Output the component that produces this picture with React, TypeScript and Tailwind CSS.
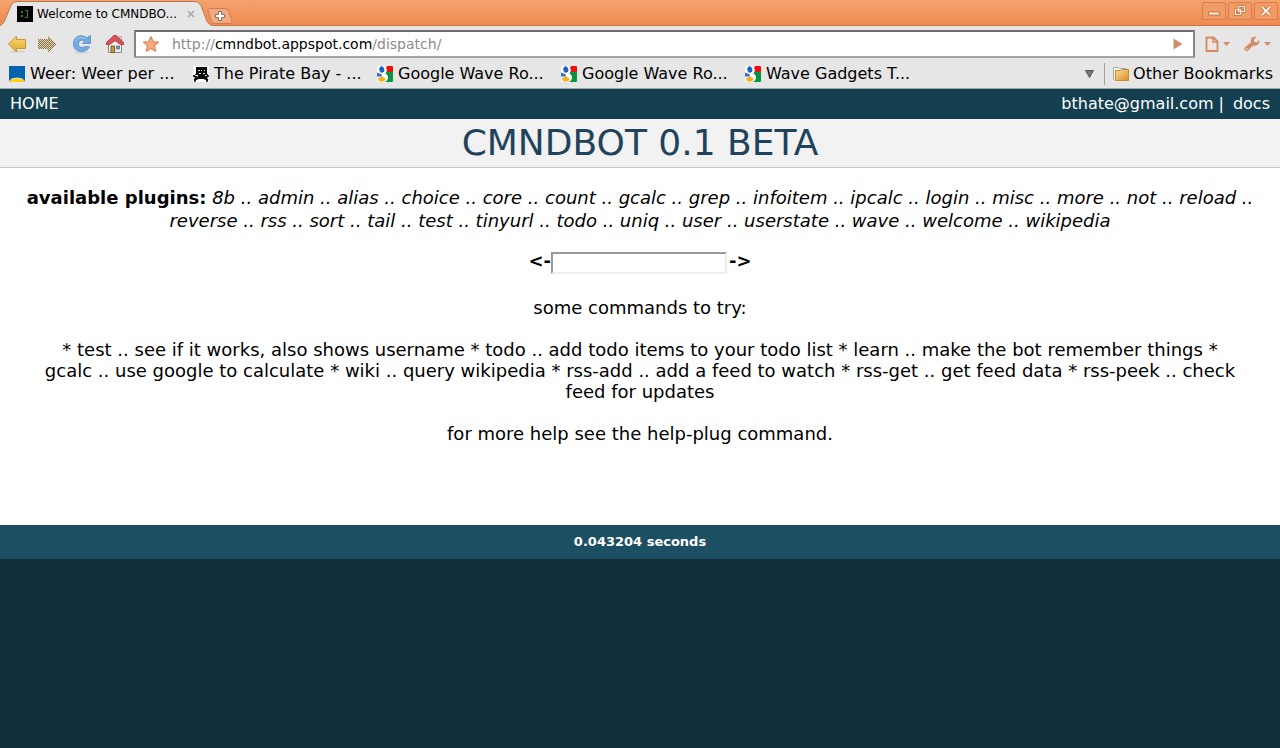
import React from "react";

function TerminalIcon() {
  return (
    <svg width="16" height="16" viewBox="0 0 16 16" className="shrink-0" aria-hidden="true">
      <rect width="16" height="16" fill="#000" />
      <path d="M4 5h2v2H4zM4 9h2v2H4zM8 4h3v8H8v-1h2V5H8z" fill="#0c9a12" />
    </svg>
  );
}

function BackIcon() {
  return (
    <svg width="20" height="20" viewBox="0 0 20 20" aria-hidden="true">
      <defs>
        <linearGradient id="back" x1="0" y1="0" x2="0" y2="1">
          <stop offset="0" stopColor="#f8d778" />
          <stop offset="1" stopColor="#e2a82c" />
        </linearGradient>
      </defs>
      <ellipse cx="11" cy="17.500" rx="7" ry="1" fill="#d3cfc6" />
      <path d="M1.500 10 9.500 2v3.500H18.500v9H9.500V18z" fill="url(#back)" stroke="#c9952c" strokeLinejoin="round" />
    </svg>
  );
}

function ForwardIcon() {
  return (
    <svg width="20" height="20" viewBox="0 0 20 20" aria-hidden="true">
      <defs>
        <pattern id="checker" width="2" height="2" patternUnits="userSpaceOnUse">
          <rect width="2" height="2" fill="#dcd5c4" />
          <path d="M0 0h1v1H0zM1 1h1v1H1z" fill="#91713a" />
        </pattern>
      </defs>
      <path d="M19 10 11 1v4H1v10h10v4z" fill="url(#checker)" shapeRendering="crispEdges" />
    </svg>
  );
}

function ReloadIcon() {
  return (
    <svg width="20" height="20" viewBox="0 0 20 20" aria-hidden="true">
      <ellipse cx="10" cy="18.500" rx="7" ry="1" fill="#d0d0ce" />
      <path
        d="M14.800 3.800 18.500 1.500V9.500H10.500l2.300-2.600C9.500 5.300 6.500 7 6.400 10c0 3.500 4.500 4.500 7 2.300l4 .5C14.500 20 1.500 19 1.500 10 1.500 1.500 10-.3 14.800 3.800z"
        fill="#75aade"
        stroke="#6597cf"
        strokeLinejoin="round"
      />
      <path d="M3.500 8C5 3.800 9.500 2.500 13 4.500" fill="none" stroke="#a9cdf0" />
    </svg>
  );
}

function HomeIcon() {
  return (
    <svg width="20" height="20" viewBox="0 0 20 20" aria-hidden="true">
      <path d="M14 2.500h2.500v6H14z" fill="#eee" stroke="#a6a6a0" />
      <path d="M3.500 9 10 4l6.500 5v9.500h-13z" fill="#f1f1ec" stroke="#8b8b84" />
      <path d="M1.500 10.500V8.500L9 1.500h2l7.500 7v2H15.500L10 6.500 4.500 10.500z" fill="#d9545a" stroke="#b9353f" strokeLinejoin="round" />
      <path d="M6 12h3.500v6.500H6z" fill="#c59a4c" stroke="#7d5e27" />
      <path d="M11.500 12h3v3h-3z" fill="#81a5cd" stroke="#647894" />
    </svg>
  );
}

function StarIcon() {
  return (
    <svg width="18" height="18" viewBox="0 0 18 18" aria-hidden="true">
      <path
        d="m9 1.500 2.200 5 5.300.6-4 3.700 1.200 5.400L9 13.500l-4.700 2.700 1.200-5.400-4-3.700 5.300-.6z"
        fill="#f7ac80"
        stroke="#d98a62"
        strokeWidth="1.200"
        strokeLinejoin="round"
      />
    </svg>
  );
}

function Caret() {
  return (
    <svg width="7" height="4" viewBox="0 0 7 4" aria-hidden="true">
      <path d="M0 0h7L3.500 4z" fill="#cf8e69" />
    </svg>
  );
}

function PageIcon() {
  return (
    <svg width="14" height="16" viewBox="0 0 14 16" aria-hidden="true">
      <path d="M1.500 1.500h7l4 4v9.500h-11z" fill="#f0e4dd" stroke="#d18b66" strokeWidth="1.800" strokeLinejoin="round" />
      <path d="M8 1.500v4.500h4.500" fill="none" stroke="#d18b66" strokeWidth="1.600" />
    </svg>
  );
}

function WrenchIcon() {
  return (
    <svg width="16" height="16" viewBox="0 0 16 16" aria-hidden="true">
      <path
        d="M12.500 1C9.500-.2 5.800 2.300 7 6.200L1 11.300c-1.800 1.800 1 5 3 3.200L9.300 9.400c3.200 1.200 6.500-1.200 6.200-5.400l-3 2.500-2.400-.8-.2-2.200z"
        fill="#d18b66"
      />
      <circle cx="2.800" cy="12.900" r=".8" fill="#f4e7df" />
    </svg>
  );
}

function WeerIcon() {
  return (
    <svg width="16" height="16" viewBox="0 0 16 16" className="shrink-0" aria-hidden="true">
      <rect width="16" height="16" fill="#0462b0" />
      <path d="M0 16Q2 12 8 12t8 4z" fill="#ffcf10" />
      <path d="M0 15.500Q2 12 8 12t8 3.500" fill="none" stroke="#e9e9a4" />
    </svg>
  );
}

function PirateIcon() {
  return (
    <svg width="16" height="16" viewBox="0 0 16 16" className="shrink-0" aria-hidden="true">
      <rect width="16" height="16" fill="#fff" />
      <path d="M3 1h11v6l1 2h-3v2H5V9H2l1-2z" fill="#0a0a0a" />
      <path d="M5 4h2v1H5zM8 4h1v1H8zM11 4h1v1h-1zM6 7h2v1H6zM10 7h2v1h-2z" fill="#ddd" />
      <path d="m1 10 4 2h6l4-2M1 14l4-2M15 14l-4-2" fill="none" stroke="#0a0a0a" strokeWidth="2" />
      <path d="M0 10h2M14 10h2M1 15h2M13 15h2" stroke="#0a0a0a" strokeWidth="1.500" />
    </svg>
  );
}

function GoogleIcon() {
  return (
    <svg width="16" height="16" viewBox="0 0 16 16" className="shrink-0" aria-hidden="true">
      <rect width="16" height="16" rx="1" fill="#fff" />
      <path d="M8 0h7q1 0 1 1v5H8z" fill="#ee1111" />
      <path d="M8 6h8v9q0 1-1 1H8z" fill="#099441" />
      <path d="M7 0h3L9 2c2 3 0 5-1 5 4 2 4 7 0 9H6z" fill="#fff" />
      <ellipse cx="4.800" cy="3.500" rx="2.500" ry="3.200" transform="rotate(-15 4.800 3.500)" fill="#1d5fc4" />
      <path d="M0 6.500 4 8l1.500 2.500H0z" fill="#3672c9" />
      <ellipse cx="4.700" cy="13.300" rx="3.600" ry="2.300" fill="#f4b416" />
    </svg>
  );
}

function FolderIcon() {
  return (
    <svg width="16" height="16" viewBox="0 0 16 16" className="shrink-0" aria-hidden="true">
      <defs>
        <linearGradient id="folder" x1="0" y1="0" x2="1" y2="1">
          <stop offset="0" stopColor="#fbe09a" />
          <stop offset="1" stopColor="#dd8b20" />
        </linearGradient>
      </defs>
      <path d="M.5 14V1.500h5l1 1h7V5" fill="#f8f8f8" stroke="#aaa" />
      <path d="M2.500 4.500h5l1-1h7v11h-13z" fill="url(#folder)" stroke="#c9882f" />
    </svg>
  );
}

function TabStrip() {
  const control = "flex h-[18px] w-6 items-center justify-center rounded-xs border border-[#d77e4c] bg-[#f29b66]";
  return (
    <div className="flex h-[26px] items-start justify-between border-b border-[#c77345] bg-linear-to-b from-[#f5a26d] to-[#ee8b51]">
      <div className="flex">
        <div className="relative h-[26px] w-[212px]">
          <svg className="absolute inset-0" width="212" height="26" viewBox="0 0 212 26" aria-hidden="true">
            <path
              d="M0 25.500C4 24 5 20 7 15L11 5.500Q12.500 1.500 17 1.500H195Q199 1.500 201 5.500L205 16C207 22 208 24 212 25.500V26H0z"
              fill="#e6e6e6"
            />
            <path
              d="M0 25.500C4 24 5 20 7 15L11 5.500Q12.500 1.500 17 1.500H195Q199 1.500 201 5.500L205 16C207 22 208 24 212 25.500"
              fill="none"
              stroke="#b87550"
            />
          </svg>
          <div className="relative flex h-[26px] items-center gap-1 pt-0.5 pr-[15px] pl-[17px]">
            <TerminalIcon />
            <span className="flex-1 text-[12px] whitespace-nowrap">Welcome to CMNDBO...</span>
            <button aria-label="Close tab" className="flex size-3 items-center justify-center">
              <svg width="8" height="8" viewBox="0 0 8 8" aria-hidden="true">
                <path d="m1 1 6 6M7 1 1 7" stroke="#a8a8a8" strokeWidth="1.600" />
              </svg>
            </button>
          </div>
        </div>
        <button aria-label="New tab" className="-ml-1.5 pt-1.5">
          <svg width="27" height="16" viewBox="0 0 27 16" className="block" aria-hidden="true">
            <path d="M3.500.5H19Q21.500.5 22.500 3L26 13q.5 2.500-2 2.500H9Q6.500 15.500 5.500 13L2 3Q1.500.5 3.500.5z" fill="#f3aa7e" stroke="#cc7d50" />
            <path d="M12.500 3.500h3v3h3v3h-3v3h-3v-3h-3v-3h3z" fill="#fff" stroke="#7e706b" />
          </svg>
        </button>
      </div>
      <div className="flex gap-0.5 pt-0.5 pr-0.5">
        <button aria-label="Minimize" className={control}>
          <svg width="12" height="12" viewBox="0 0 12 12" aria-hidden="true">
            <path d="M.5 7h11v3H.5z" fill="#fff4e8" stroke="#c47142" />
          </svg>
        </button>
        <button aria-label="Restore" className={control}>
          <svg width="12" height="12" viewBox="0 0 12 12" aria-hidden="true">
            <path d="M4.500 1.500h6v5h-6zM1.500 4.500h5v5h-5z" fill="none" stroke="#c47142" strokeWidth="2.500" />
            <path d="M4.500 1.500h6v5h-6zM1.500 4.500h5v5h-5z" fill="none" stroke="#fff0df" strokeWidth="1.200" />
          </svg>
        </button>
        <button aria-label="Close" className={control}>
          <svg width="12" height="12" viewBox="0 0 12 12" aria-hidden="true">
            <path d="m2 2 8 8M10 2l-8 8" stroke="#c47142" strokeWidth="3.500" />
            <path d="m2 2 8 8M10 2l-8 8" stroke="#fff4e8" strokeWidth="1.800" />
          </svg>
        </button>
      </div>
    </div>
  );
}

function Toolbar() {
  return (
    <div className="flex h-[33px] items-center pt-[3px] pr-[9px] pl-[7px]">
      <button aria-label="Back" className="mr-2.5">
        <BackIcon />
      </button>
      <button aria-label="Forward" className="mr-[15px]">
        <ForwardIcon />
      </button>
      <button aria-label="Reload" className="mr-[13px]">
        <ReloadIcon />
      </button>
      <button aria-label="Home page" className="mr-[9px]">
        <HomeIcon />
      </button>
      <form
        className="flex h-7 flex-1 items-center border-2 border-t-[#6e6e6e] border-r-[#858585] border-b-[#a3a3a3] border-l-[#858585] bg-white pr-2.5 pl-1.5"
        onSubmit={(event) => event.preventDefault()}
      >
        <button type="button" aria-label="Bookmark this page" className="mr-3">
          <StarIcon />
        </button>
        <div
          role="textbox"
          aria-label="Address"
          contentEditable
          suppressContentEditableWarning
          className="flex-1 text-[14px] whitespace-nowrap text-[#8b8b8b] outline-none"
        >
          http://<span className="text-black">cmndbot.appspot.com</span>/dispatch/
        </div>
        <button aria-label="Go">
          <svg width="10" height="12" viewBox="0 0 10 12" aria-hidden="true">
            <path d="M.5.500 9.500 6 .5 11.500z" fill="#cf8e69" />
          </svg>
        </button>
      </form>
      <button aria-label="Page menu" className="ml-2.5 flex items-center gap-1">
        <PageIcon />
        <Caret />
      </button>
      <button aria-label="Tools menu" className="ml-3.5 flex items-center gap-1">
        <WrenchIcon />
        <Caret />
      </button>
    </div>
  );
}

const bookmarks = [
  { label: "Weer: Weer per ...", Icon: WeerIcon },
  { label: "The Pirate Bay - ...", Icon: PirateIcon },
  { label: "Google Wave Ro...", Icon: GoogleIcon },
  { label: "Google Wave Ro...", Icon: GoogleIcon },
  { label: "Wave Gadgets T...", Icon: GoogleIcon },
];

function BookmarkBar() {
  return (
    <nav aria-label="Bookmarks" className="flex h-[30px] items-center border-b border-[#9aa5a8] pr-[7px] pl-[9px] text-[16px]">
      {bookmarks.map(({ label, Icon }, index) => (
        <a key={index} href="#" className="flex w-[184px] items-center gap-[5px] whitespace-nowrap">
          <Icon />
          {label}
        </a>
      ))}
      <div className="flex-1" />
      <button aria-label="More bookmarks" className="mr-2.5">
        <svg width="9" height="8" viewBox="0 0 9 8" aria-hidden="true">
          <path d="M.5.500h8L4.500 7.500z" fill="#777" stroke="#555" />
        </svg>
      </button>
      <a href="#" className="flex items-center gap-1 whitespace-nowrap">
        <span className="mr-1 h-[22px] w-px bg-[#a0a0a0]" />
        <FolderIcon />
        Other Bookmarks
      </a>
    </nav>
  );
}

export default function App() {
  return (
    <div className="flex min-h-screen flex-col bg-[#112f3b] font-['DejaVu_Sans',sans-serif] text-black">
      <header className="bg-[#e6e6e6]">
        <TabStrip />
        <Toolbar />
        <BookmarkBar />
      </header>

      <nav className="flex h-[30px] items-center justify-between bg-[#133f51] px-2.5 text-[16px] text-white">
        <a href="#">HOME</a>
        <div className="flex gap-[5px]">
          <a href="#">bthate@gmail.com</a>
          <span className="mr-1">|</span>
          <a href="#">docs</a>
        </div>
      </nav>

      <h1 className="flex h-[49px] items-center justify-center border-b border-[#c8c8c8] bg-[#f2f2f2] text-[36px] text-[#1f435c]">
        CMNDBOT 0.1 BETA
      </h1>

      <main className="bg-white px-5 pt-[18px] pb-[81px] text-center text-[18px] leading-[21px]">
        <p className="leading-[23px]">
          <b>available plugins:</b>{" "}
          <i>
            8b .. admin .. alias .. choice .. core .. count .. gcalc .. grep .. infoitem .. ipcalc .. login .. misc .. more .. not .. reload ..
            reverse .. rss .. sort .. tail .. test .. tinyurl .. todo .. uniq .. user .. userstate .. wave .. welcome .. wikipedia
          </i>
        </p>
        <form className="mt-5 flex items-start justify-center leading-[18px] font-bold" onSubmit={(event) => event.preventDefault()}>
          <label htmlFor="command">&lt;-</label>
          <input
            id="command"
            type="text"
            className="mr-0.5 h-[22px] w-44 border-2 border-t-[#999] border-r-[#eee] border-b-[#eee] border-l-[#999] bg-white px-1 text-[13px] font-normal outline-none"
          />
          <span>-&gt;</span>
        </form>
        <div className="mt-[23px] flex flex-col gap-[21px] px-5">
          <p>some commands to try:</p>
          <p>
            * test .. see if it works, also shows username * todo .. add todo items to your todo list * learn .. make the bot remember things *
            gcalc .. use google to calculate * wiki .. query wikipedia * rss-add .. add a feed to watch * rss-get .. get feed data * rss-peek .. check
            feed for updates
          </p>
          <p>for more help see the help-plug command.</p>
        </div>
      </main>

      <footer className="flex h-[34px] items-center justify-center bg-[#1d4f63] text-[13px] font-bold text-white">0.043204 seconds</footer>
    </div>
  );
}
